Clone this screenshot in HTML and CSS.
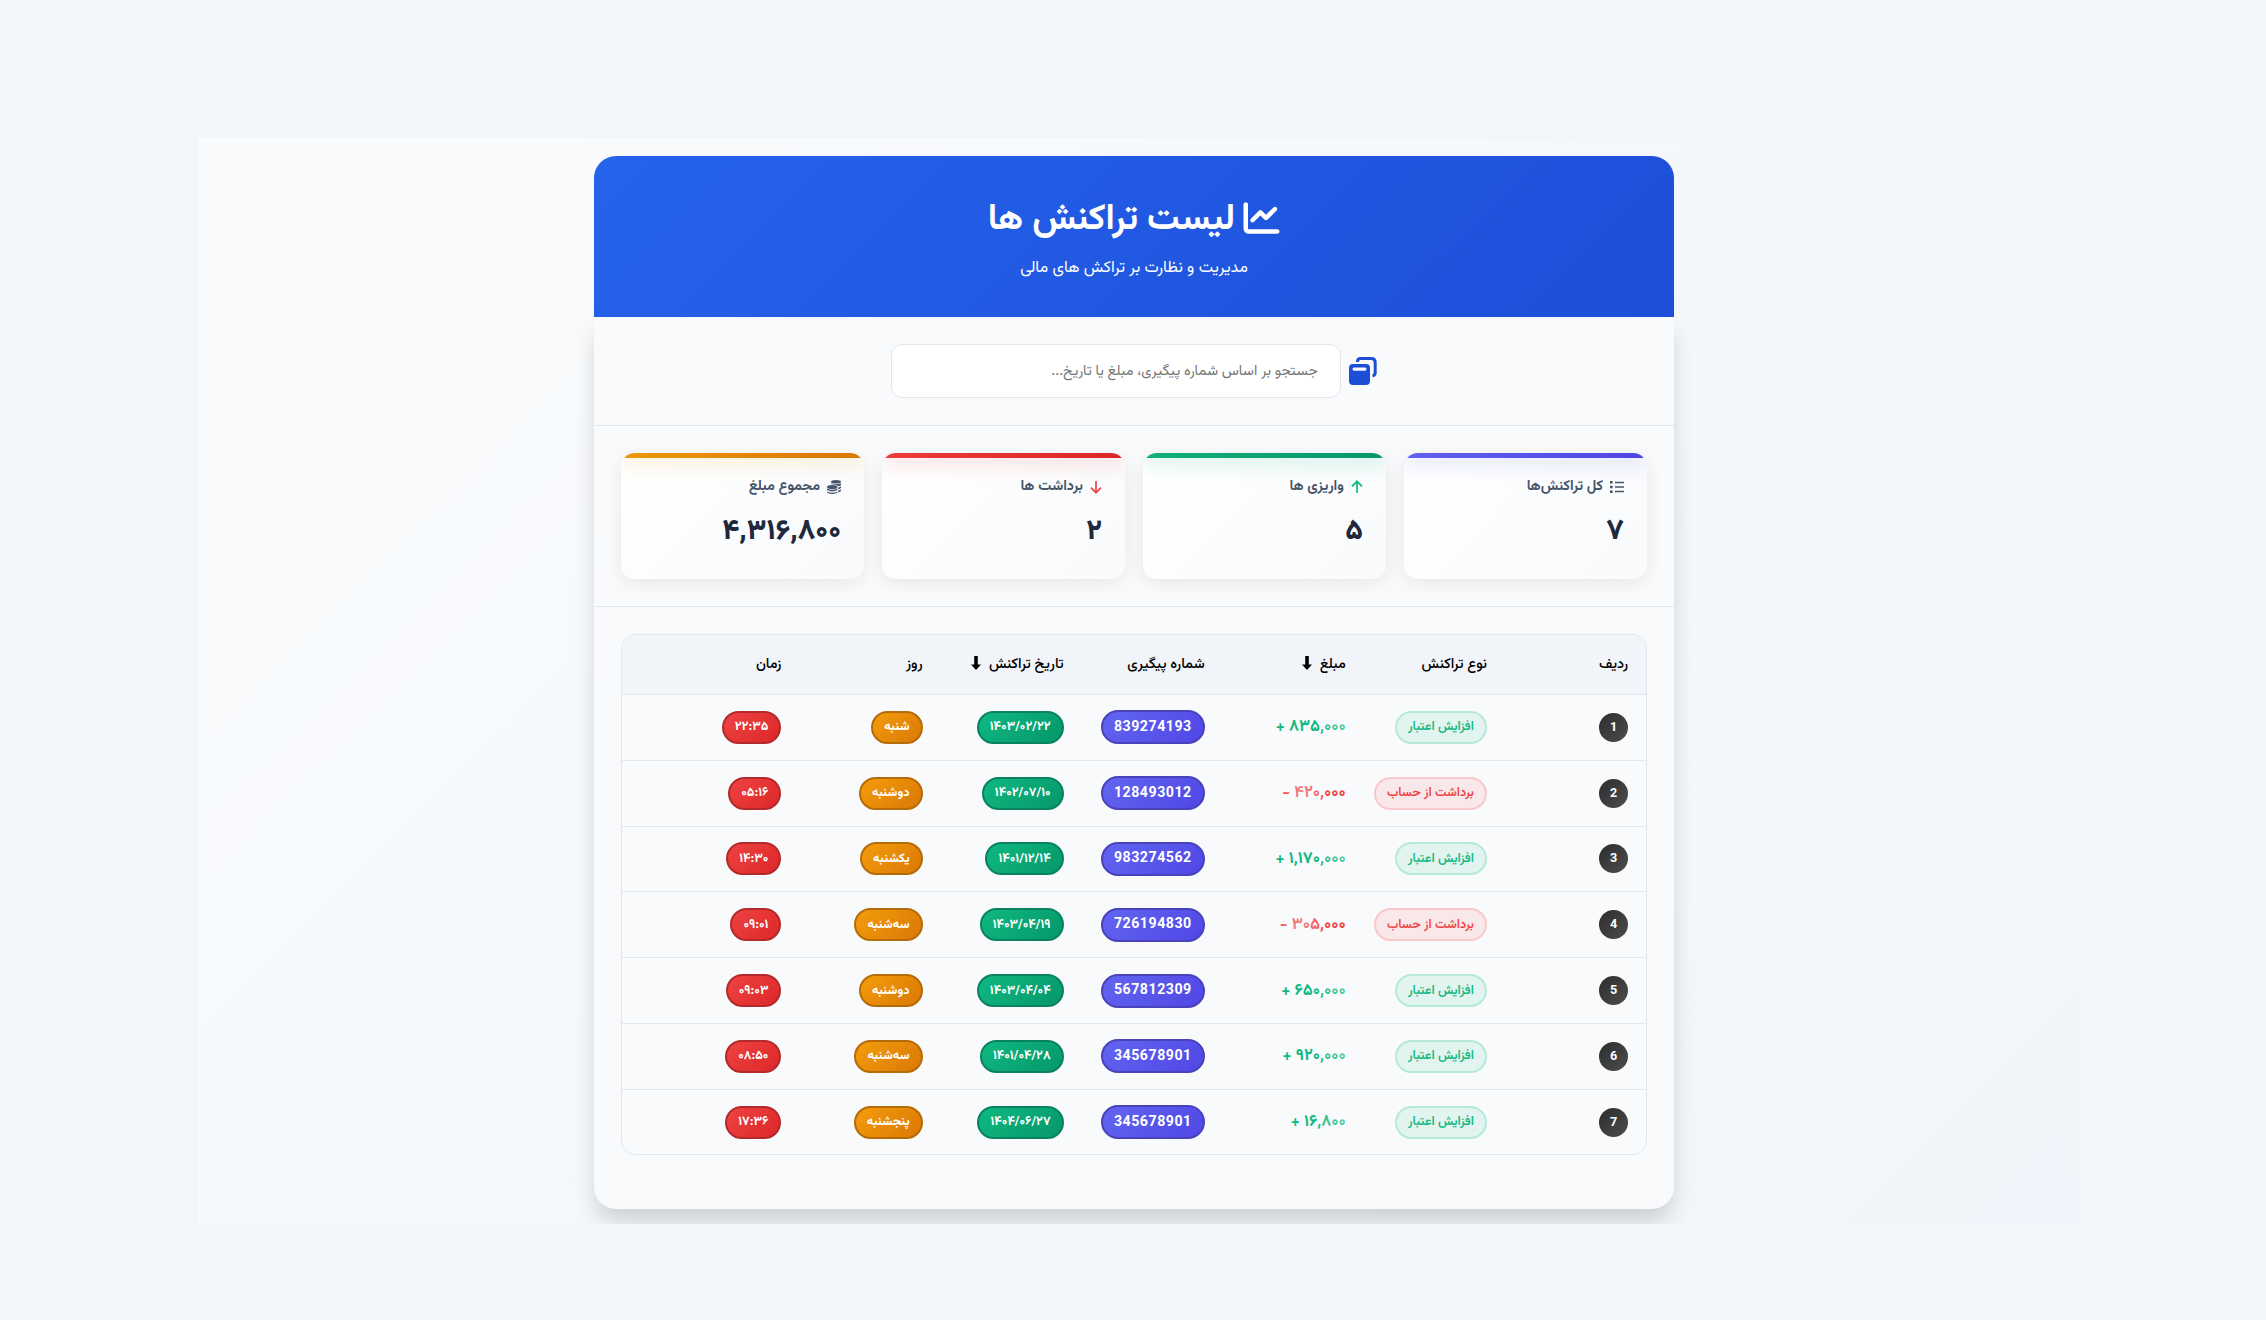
FILE: index.html
```
<!DOCTYPE html>
<html lang="fa" dir="rtl">
<head>
<meta charset="utf-8">
<title>لیست تراکنش ها</title>
<link rel="stylesheet" href="styles.css">
</head>
<body>
<main class="page">
<div class="card">
<header class="hero">
<h1 class="hero-title"><svg class="hero-icon" viewBox="0 0 512 512"><path d="M64 64c0-17.700-14.300-32-32-32S0 46.300 0 64V400c0 44.200 35.800 80 80 80H480c17.700 0 32-14.300 32-32s-14.300-32-32-32H80c-8.800 0-16-7.200-16-16V64zm406.600 86.600c12.500-12.500 12.500-32.800 0-45.300s-32.800-12.500-45.300 0L320 210.700l-57.400-57.400c-12.500-12.500-32.800-12.500-45.300 0l-112 112c-12.500 12.500-12.500 32.800 0 45.300s32.800 12.500 45.300 0L240 221.300l57.400 57.400c12.500 12.500 32.800 12.500 45.300 0l128-128z"/></svg><span>لیست تراکنش ها</span></h1>
<p class="hero-sub">مدیریت و نظارت بر تراکش های مالی</p>
</header>
<div class="content">
<section class="search">
<svg class="search-icon" viewBox="0 0 28 28"><path d="M8.500 5V4.500Q8.500 1.500 11.500 1.500H22.500Q26.200 1.500 26.200 5.500V16Q26.200 18.200 23.500 18.700" fill="none" stroke="currentColor" stroke-width="3"/><path fill-rule="evenodd" d="M4 7H17Q21 7 21 11V24Q21 28 17 28H4Q0 28 0 24V11Q0 7 4 7ZM5 10.500Q3.500 10.500 3.500 12T5 13.700H16Q17.500 13.700 17.500 12T16 10.500Z"/></svg>
<input class="search-input" type="text" placeholder="جستجو بر اساس شماره پیگیری، مبلغ یا تاریخ...">
</section>
<section class="stats">
<article class="stat violet"><h3 class="stat-label"><svg class="ic" viewBox="0 0 14 14"><path d="M5 2.500H14M5 7H14M5 11.500H14" stroke="currentColor" stroke-width="1.500"/><path d="M0 1h2.600v2.600H0zM0 5.700h2.600v2.600H0zM0 10.400h2.600V13H0z"/></svg><span>کل تراکنش‌ها</span></h3><p class="stat-value">۷</p></article>
<article class="stat green"><h3 class="stat-label"><svg class="ic arrow" viewBox="0 0 12 14"><path d="M6 13V1.500M1 6.300L6 1.300L11 6.300" fill="none" stroke="currentColor" stroke-width="1.700"/></svg><span>واریزی ها</span></h3><p class="stat-value">۵</p></article>
<article class="stat red"><h3 class="stat-label"><svg class="ic arrow" viewBox="0 0 12 14"><path d="M6 1V12.500M1 7.700L6 12.700L11 7.700" fill="none" stroke="currentColor" stroke-width="1.700"/></svg><span>برداشت ها</span></h3><p class="stat-value">۲</p></article>
<article class="stat amber"><h3 class="stat-label"><svg class="ic" viewBox="0 0 14 14"><ellipse cx="9" cy="1.800" rx="5" ry="1.800"/><path d="M14 3.200v1.700q-1 1.300-3 1.400Q9.500 4.500 4.200 4.200V3.200Q9 5.200 14 3.200ZM14 6.300v1.800q-.8.900-2.700 1.300V7.400Q13 7.200 14 6.300ZM14 9.500v1.600q-.8 1-2.700 1.300v-2Q13 10.200 14 9.500Z"/><ellipse cx="5.200" cy="6.900" rx="5.200" ry="2"/><path d="M0 8.500q5.200 2.400 10.400 0v1.600q-5.200 2.600-10.400 0ZM0 11.500q5.200 2.400 10.400 0v1q-5.200 3-10.400 0Z"/></svg><span>مجموع مبلغ</span></h3><p class="stat-value">۴,۳۱۶,۸۰۰</p></article>
</section>
<section class="list">
<div class="table-box">
<table class="table">
<thead><tr><th>ردیف</th><th>نوع تراکنش</th><th>مبلغ<svg class="sort" viewBox="0 0 10 14"><path d="M3.200 0H6.800V8.500H10L5 14L0 8.500H3.200Z"/></svg></th><th>شماره پیگیری</th><th>تاریخ تراکنش<svg class="sort" viewBox="0 0 10 14"><path d="M3.200 0H6.800V8.500H10L5 14L0 8.500H3.200Z"/></svg></th><th>روز</th><th class="last">زمان</th></tr></thead>
<tbody>
<tr><td><b class="num">1</b></td><td><span class="pill plus">افزایش اعتبار</span></td><td><span class="amount up">۸۳۵,۰۰۰ +</span></td><td><span class="pill code">839274193</span></td><td><span class="pill date">۱۴۰۳/۰۲/۲۲</span></td><td><span class="pill day">شنبه</span></td><td><span class="pill time">۲۲:۳۵</span></td></tr>
<tr><td><b class="num">2</b></td><td><span class="pill minus">برداشت از حساب</span></td><td><span class="amount down">۴۲۰,۰۰۰ -</span></td><td><span class="pill code">128493012</span></td><td><span class="pill date">۱۴۰۲/۰۷/۱۰</span></td><td><span class="pill day">دوشنبه</span></td><td><span class="pill time">۰۵:۱۶</span></td></tr>
<tr><td><b class="num">3</b></td><td><span class="pill plus">افزایش اعتبار</span></td><td><span class="amount up">۱,۱۷۰,۰۰۰ +</span></td><td><span class="pill code">983274562</span></td><td><span class="pill date">۱۴۰۱/۱۲/۱۴</span></td><td><span class="pill day">یکشنبه</span></td><td><span class="pill time">۱۴:۳۰</span></td></tr>
<tr><td><b class="num">4</b></td><td><span class="pill minus">برداشت از حساب</span></td><td><span class="amount down">۳۰۵,۰۰۰ -</span></td><td><span class="pill code">726194830</span></td><td><span class="pill date">۱۴۰۳/۰۴/۱۹</span></td><td><span class="pill day">سه‌شنبه</span></td><td><span class="pill time">۰۹:۰۱</span></td></tr>
<tr><td><b class="num">5</b></td><td><span class="pill plus">افزایش اعتبار</span></td><td><span class="amount up">۶۵۰,۰۰۰ +</span></td><td><span class="pill code">567812309</span></td><td><span class="pill date">۱۴۰۳/۰۴/۰۴</span></td><td><span class="pill day">دوشنبه</span></td><td><span class="pill time">۰۹:۰۳</span></td></tr>
<tr><td><b class="num">6</b></td><td><span class="pill plus">افزایش اعتبار</span></td><td><span class="amount up">۹۲۰,۰۰۰ +</span></td><td><span class="pill code">345678901</span></td><td><span class="pill date">۱۴۰۱/۰۴/۲۸</span></td><td><span class="pill day">سه‌شنبه</span></td><td><span class="pill time">۰۸:۵۰</span></td></tr>
<tr><td><b class="num">7</b></td><td><span class="pill plus">افزایش اعتبار</span></td><td><span class="amount up">۱۶,۸۰۰ +</span></td><td><span class="pill code">345678901</span></td><td><span class="pill date">۱۴۰۴/۰۶/۲۷</span></td><td><span class="pill day">پنجشنبه</span></td><td><span class="pill time">۱۷:۳۶</span></td></tr>
</tbody>
</table>
</div>
</section>
</div>
</div>
</main>
</body>
</html>
```
FILE: styles.css
```
* { box-sizing: border-box; margin: 0; padding: 0; }
svg { fill: currentColor; }
body {
  height: 1320px;
  padding-top: 138px;
  background: #f2f6f9;
  color: #1e293b;
  font-family: Vazirmatn, Roboto, "DejaVu Sans Condensed", "DejaVu Sans", sans-serif;
  overflow: hidden;
}
.page {
  width: 1877px;
  height: 1086px;
  margin: 0 191px 0 198px;
  padding: 18px 0 0;
  display: flex;
  justify-content: center;
  align-items: flex-start;
  overflow: hidden;
  background: linear-gradient(135deg, #fafbfd 0%, #f8fafc 20%, #f5f8fb 50%, #f2f6fa 92%, #f1f4fa 100%);
}
.card {
  width: 1080px;
  margin-right: 5px;
}
.hero {
  height: 161px;
  padding-top: 39px;
  border-radius: 22px 22px 0 0;
  background: linear-gradient(135deg, #2563eb, #1d4ed8);
  color: #fff;
  text-align: center;
  position: relative;
}
.content {
  height: 892px;
  border-radius: 0 0 22px 22px;
  background: #f9fafc;
  box-shadow: 0 18px 22px -4px rgba(0,0,0,.1), 0 9px 26px rgba(0,0,0,.07);
}
.hero-title {
  display: flex;
  justify-content: center;
  align-items: center;
  gap: 8px;
  height: 50px;
  font-size: 36px;
  line-height: 50px;
  white-space: nowrap;
}
.hero-icon { width: 37px; height: 36px; margin-top: -5px; }
.hero-sub { padding-top: 9px; font-size: 16.2px; line-height: 28px; }
.search {
  height: 109px;
  padding-top: 27px;
  display: flex;
  justify-content: center;
  gap: 8px;
  border-bottom: 1px solid #e2e8f0;
}
.search-icon { width: 28px; height: 28px; margin-top: 13px; color: #1d4ed8; }
.search-input {
  width: 450px;
  height: 54px;
  padding: 0 22px;
  border: 1px solid #dfe6ef;
  border-radius: 11px;
  background: #fff;
  font-family: inherit;
  font-size: 14.4px;
}
.search-input::placeholder { color: #757575; }
.stats {
  display: grid;
  grid-template-columns: repeat(4, 243px);
  gap: 18px;
  height: 181px;
  padding: 27px;
  border-bottom: 1px solid #e2e8f0;
}
.stat {
  height: 126px;
  padding: 21px 23px 0;
  border-radius: 14px;
  position: relative;
  overflow: hidden;
  background: linear-gradient(135deg, #fff, #f8fafc);
  box-shadow: 0 4px 18px rgba(0,0,0,.08);
}
.stat::before {
  content: "";
  position: absolute;
  inset: 0 0 auto;
  height: 5px;
  background: var(--bar);
  box-shadow: 0 4px 18px var(--glow);
}
.violet { --bar: linear-gradient(90deg, #6060ef, #4f46e5); --glow: #6366f166; --ic: #475569; }
.green { --bar: linear-gradient(90deg, #10b07c, #059669); --glow: #10b98166; --ic: #10b981; }
.red { --bar: linear-gradient(90deg, #eb3c3c, #dc2626); --glow: #ef444466; --ic: #ef4444; }
.amber { --bar: linear-gradient(90deg, #ee980b, #d97706); --glow: #f59e0b66; --ic: #475569; }
.stat-label {
  display: flex;
  align-items: center;
  gap: 7px;
  height: 24px;
  color: #475569;
  font-size: 14.4px;
  font-weight: 700;
}
.ic { width: 14px; height: 14px; margin-top: 1px; color: var(--ic); }
.ic.arrow { width: 12px; }
.stat-value { font-size: 28.8px; font-weight: 800; line-height: 40px; margin-top: 14px; }
.list { padding: 27px; }
.table-box { height: 521px; border: 1px solid #dfe7ef; border-radius: 14px; overflow: hidden; }
.table { width: 100%; table-layout: fixed; border-collapse: separate; border-spacing: 0; }
th, td { width: 141.1px; padding: 0 18px 0 0; text-align: right; vertical-align: middle; white-space: nowrap; }
.last { width: auto; }
th { height: 59px; background: #f1f4f9; color: #000; font-size: 14.4px; font-weight: 500; }
td { height: 65.8px; border-top: 1px solid #e0e7ef; line-height: 0; }
.sort { width: 10px; height: 14px; margin-right: 8px; vertical-align: -2px; }
.num {
  display: inline-flex;
  align-items: center;
  justify-content: center;
  width: 29px;
  height: 29px;
  border-radius: 50%;
  background: linear-gradient(135deg, #2d2d2d, #4d4d4d);
  color: #fff;
  font-size: 12.6px;
  padding-top: 1px;
}
.pill {
  display: inline-flex;
  align-items: center;
  justify-content: center;
  height: 33px;
  padding: 0 11px;
  border: 2px solid;
  border-radius: 18px;
  font-size: 12.6px;
  font-weight: 700;
  color: #fff;
  background-origin: border-box;
}
.plus { font-weight: 600; color: #10b981; background: #e1f4ef; border-color: #b7e9d9; }
.minus { font-weight: 600; color: #ef4444; background: #f8e8e9; border-color: #f8c8ca; }
.code { height: 34px; padding-top: 1px; font-size: 14.2px; letter-spacing: .5px; border-color: #4943bb; background-image: linear-gradient(135deg, #6366f1, #4f46e5); }
.date { border-color: #09835d; background-image: linear-gradient(135deg, #10b981, #059669); }
.day { border-color: #b46b08; background-image: linear-gradient(135deg, #f59e0b, #d97706); }
.time { border-color: #b32a2c; background-image: linear-gradient(135deg, #ef4444, #dc2626); }
.amount { display: inline-block; position: relative; font-size: 16.4px; font-weight: 700; line-height: 30px; }
.amount::after { content: ""; position: absolute; top: 0; bottom: 0; }
.up { color: #10b981; }
.up::after { right: -7px; width: 34px; background: linear-gradient(90deg, rgba(249,250,252,.1), rgba(249,250,252,.35)); }
.down { color: #ef4444; }
.down::after { left: 0; width: 44px; background: linear-gradient(90deg, rgba(249,250,252,.1), rgba(249,250,252,.35) 45%, rgba(249,250,252,.1)); }
```
